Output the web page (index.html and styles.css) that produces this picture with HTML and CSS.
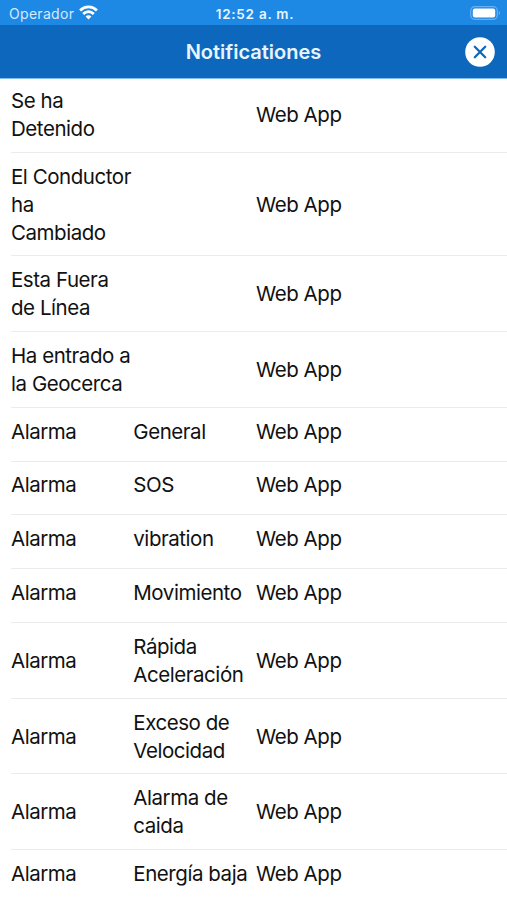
FILE: index.html
```html
<!DOCTYPE html>
<html lang="es">
<head>
<meta charset="utf-8">
<title>Notificationes</title>
<link rel="stylesheet" href="styles.css">
</head>
<body>
<div class="status">
  <div class="carrier"><span>Operador</span>
    <svg class="wifi" viewBox="0 0 19 15" width="19" height="15"><g fill="none" stroke="#fff" stroke-width="2.8"><path d="M1.1 5.4C5.8.7 13.2.7 17.9 5.4"/><path d="M4.2 8.9c3-2.9 7.6-2.9 10.6 0"/></g><path d="M6.6 11.4c1.7-1.5 4.1-1.5 5.8 0L9.5 14.4z" fill="#fff"/></svg>
  </div>
  <span class="time">12:52 a. m.</span>
  <svg class="battery" viewBox="0 0 31 14" width="31" height="14"><rect x=".7" y=".7" width="26.6" height="12.6" rx="4" fill="none" stroke="#6bb0ef" stroke-width="1.2"/><rect x="2.8" y="2.6" width="22.4" height="8.8" rx="2" fill="#fff"/><path d="M28.8 5c1.8.7 1.8 3.3 0 4z" fill="#6bb0ef"/></svg>
</div>
<header class="bar">
  <h1>Notificationes</h1>
  <button class="close" aria-label="Cerrar"><svg viewBox="0 0 30 30" width="30" height="30"><circle cx="15" cy="15" r="14.8" fill="#fff"/><path d="M9.8 9.8l10.4 10.4M20.2 9.8L9.8 20.2" stroke="#0d68bd" stroke-width="2.3" stroke-linecap="round"/></svg></button>
</header>
<main class="list">
  <div class="row"><span>Se ha<br>Detenido</span><span></span><span>Web App</span></div>
  <div class="row"><span>El Conductor<br>ha<br>Cambiado</span><span></span><span>Web App</span></div>
  <div class="row"><span>Esta Fuera<br>de Línea</span><span></span><span>Web App</span></div>
  <div class="row"><span>Ha entrado a<br>la Geocerca</span><span></span><span>Web App</span></div>
  <div class="row"><span>Alarma</span><span>General</span><span>Web App</span></div>
  <div class="row"><span>Alarma</span><span>SOS</span><span>Web App</span></div>
  <div class="row"><span>Alarma</span><span>vibration</span><span>Web App</span></div>
  <div class="row"><span>Alarma</span><span>Movimiento</span><span>Web App</span></div>
  <div class="row"><span>Alarma</span><span>Rápida<br>Aceleración</span><span>Web App</span></div>
  <div class="row"><span>Alarma</span><span>Exceso de<br>Velocidad</span><span>Web App</span></div>
  <div class="row"><span>Alarma</span><span>Alarma de<br>caida</span><span>Web App</span></div>
  <div class="row"><span>Alarma</span><span>Energía baja</span><span>Web App</span></div>
</main>
</body>
</html>
```
FILE: styles.css
```css
* { box-sizing: border-box; }
body {
  margin: 0;
  height: 900px;
  overflow: hidden;
  display: flex;
  flex-direction: column;
  background: #fff;
  color: #111;
  font-family: Inter, "Liberation Sans", sans-serif;
}
.status {
  flex: none;
  height: 25px;
  padding: 2px 6px 0 9px;
  display: grid;
  grid-template-columns: 1fr auto 1fr;
  align-items: center;
  background: #1e88e5;
  color: #fff;
}
.carrier {
  display: flex;
  align-items: center;
  gap: 5px;
  font-size: 14px;
  letter-spacing: .3px;
  color: #d5eafc;
}
.wifi { margin-top: -3px; }
.time {
  font-size: 13.5px;
  font-weight: 600;
  letter-spacing: .75px;
  color: #e8f4fe;
}
.battery { justify-self: end; margin-top: -2px; }
.bar {
  flex: none;
  height: 54px;
  padding: 0 12px;
  display: grid;
  grid-template-columns: 30px 1fr 30px;
  align-items: center;
  background: #0d68bd;
  border-bottom: 1px solid #7fbcf0;
  z-index: 1;
}
h1 {
  grid-column: 2;
  margin: 0;
  padding-top: 1px;
  text-align: center;
  font-size: 20px;
  font-weight: 600;
  color: #e8f5ff;
}
.close {
  width: 30px;
  height: 30px;
  padding: 0;
  border: 0;
  background: none;
}
.close svg { display: block; }
.list {
  margin: -1.9px 0 0 11px;
  flex: none;
}
.row {
  display: grid;
  grid-template-columns: 122.3px 122.7px 1fr;
  align-items: center;
  align-content: start;
  min-height: 53.8px;
  padding: 9.8px 0 8.9px;
  border-bottom: 1px solid #ececec;
  font-size: 20.5px;
  line-height: 28px;
  letter-spacing: -.45px;
  white-space: nowrap;
}
.row:last-child { border-bottom: 0; }
```
